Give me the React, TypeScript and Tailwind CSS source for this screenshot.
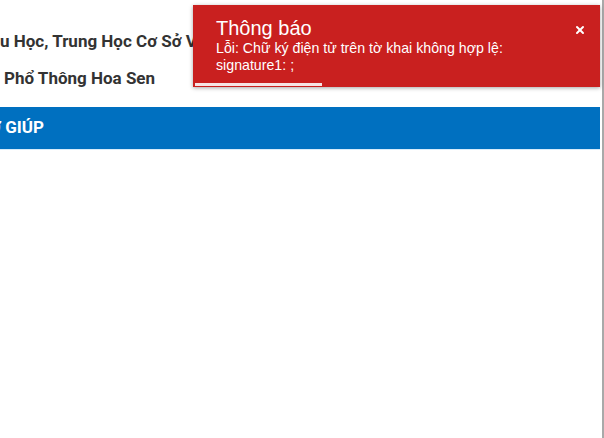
import { X } from 'lucide-react';

function Toast() {
  return (
    <div className="absolute left-[193px] top-[5px] w-[407px] h-[82px] bg-[#c9201f] shadow-[0_1px_4px_rgba(0,0,0,0.35)] text-white font-['Liberation_Sans',Arial,sans-serif]">
      <div className="pl-[23px] pr-4 pt-[12px]">
        <h2 className="text-[20px] leading-[22px]">Thông báo</h2>
        <p className="text-[14.2px] leading-[17px] mt-[1px]">
          Lỗi: Chữ ký điện tử trên tờ khai không hợp lệ:
          <br />
          signature1: ;
        </p>
      </div>
      <button className="absolute right-[14px] top-[19px] text-white">
        <X size={12} strokeWidth={4} />
      </button>
      <div className="absolute left-[2px] bottom-[1px] w-[127px] h-[3px] bg-[#f6e4e4]" />
    </div>
  );
}

export default function App() {
  return (
    <div className="relative w-[604px] h-[438px] bg-white overflow-hidden font-['Roboto',Arial,sans-serif]">
      <div className="w-[600px] h-full">
        <div className="pt-[30px] text-[17px] font-bold text-[#333] leading-[22px]">
          <p className="whitespace-nowrap">u Học, Trung Học Cơ Sở Và Trung Học</p>
          <p className="whitespace-nowrap mt-[15px] pl-[4px]">Phổ Thông Hoa Sen</p>
        </div>
        <nav className="mt-[18px] h-[43px] bg-[#0070c0] border-b border-[#d6ebfa] flex items-center overflow-hidden">
          <span className="text-white text-[17px] font-bold whitespace-nowrap -ml-[11px]">Ợ GIÚP</span>
        </nav>
      </div>
      <div className="absolute right-0 top-0 h-full w-[2px] bg-[#a9a9a9]" />
      <Toast />
    </div>
  );
}
